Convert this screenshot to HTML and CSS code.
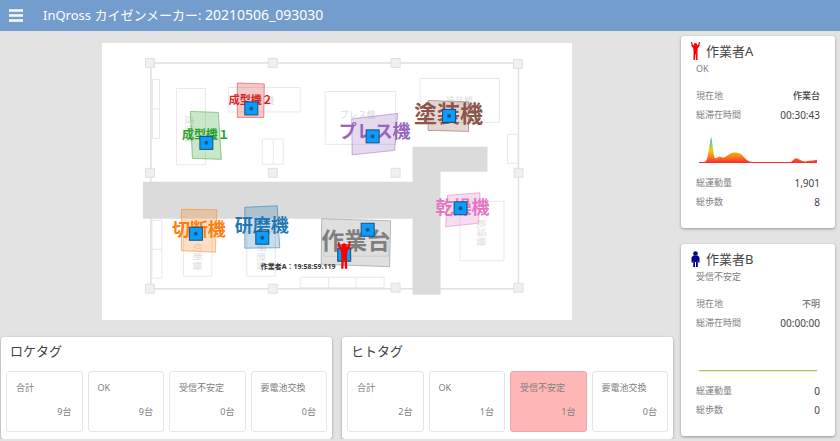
FILE: index.html
```html
<!DOCTYPE html>
<html lang="ja">
<head>
  <meta charset="UTF-8">
  <meta name="viewport" content="width=device-width, initial-scale=1.0">
  <title>InQross カイゼンメーカー</title>
  <link rel="stylesheet" href="styles.css">
</head>
<body>
  <svg class="defs" aria-hidden="true">
    <defs>
      <g id="tag">
        <rect x="-6.5" y="-6.5" width="13" height="13" fill="#0c9cfb" stroke="#145078"/>
        <circle r="2" fill="#1d587f"/>
      </g>
      <path id="person-up" d="M0 0L1.6 0L2.6 4L4.2 5C4 2.6 5 1.5 6.5 1.5S9 2.600 8.800 5L10.400 4L11.400 0L13 0L12.200 6L9.800 9.500L9.300 14L9.500 27L7.200 27L6.900 18.500L6.100 18.500L5.800 27L3.500 27L3.700 14L3.200 9.500L.8 6Z"/>
      <g id="person">
        <circle cx="4.500" cy="2.500" r="2.300"/>
        <path d="M2.200 4.500H6.800L8.500 6.500V11.500L7.500 12L6.800 9V16H5V11H4V16H2.200V9L1.500 12L.5 11.500V6.500Z"/>
      </g>
      <linearGradient id="heat" gradientUnits="userSpaceOnUse" x1="0" y1="0" x2="0" y2="26">
        <stop offset="0" stop-color="#20d8d0"/>
        <stop offset=".25" stop-color="#7ecb70"/>
        <stop offset=".5" stop-color="#f5c518"/>
        <stop offset=".75" stop-color="#fb7a1c"/>
        <stop offset="1" stop-color="#fb1838"/>
      </linearGradient>
    </defs>
  </svg>

  <header class="header">
    <button class="menu" type="button" aria-label="メニュー">
      <svg width="14" height="13" viewBox="0 0 14 13"><path d="M0 1.500H14M0 6.500H14M0 11.500H14" stroke="#fff" stroke-width="2.500"/></svg>
    </button>
    <h1>InQross カイゼンメーカー: <span>20210506_093030</span></h1>
  </header>

  <div class="layout">
    <main class="main">
      <svg class="map" viewBox="102 43 471 277" role="img" aria-label="フロアマップ">
        <!-- building -->
        <g class="wall">
          <path d="M151 63H519V289H151Z"/>
        </g>
        <g class="ghost">
          <path d="M152.500 79.500H159.500V138.500H152.500ZM152.500 109H159.500"/>
          <path d="M176.500 88.500H205.500V165H176.500Z"/>
          <path d="M228.500 87.500H300.500V112H228.500Z"/>
          <path d="M262.500 139H283.500V164.500H262.500ZM273.500 139V164.500"/>
          <path d="M325.500 91.500H396V144.500H325.500Z"/>
          <path d="M420.500 78.500H500V122.500H420.500Z"/>
          <path d="M508 134.500H518.500V163.500H508Z"/>
          <path d="M152 220.500H162V278.500H152ZM152 249.500H162"/>
          <path d="M183.500 232V276.500H212V232Z"/>
          <path d="M247 232V276.500H275.500V232Z"/>
          <path d="M460.500 201.500H504.500V261H460.500Z"/>
          <path d="M300.500 277.500H384.500V288H300.500ZM329 277.500V288M356.500 277.500V288"/>
        </g>
        <g class="ghost-text">
          <text x="358" y="118">プレス機</text>
          <text x="460" y="104">塗装機</text>
          <text x="270" y="104">機</text>
          <text transform="translate(186 129) rotate(90)">成型機</text>
          <text transform="translate(194 257) rotate(90)">切断機</text>
          <text transform="translate(258 257) rotate(90)">研磨機</text>
          <text transform="translate(478 233) rotate(90)">乾燥機</text>
        </g>
        <path class="aisle" d="M143 182H413V147H488V172H441V295H413V219H143Z"/>
        <g class="pillar">
          <path d="M145.500 58.500h9v9h-9ZM268.500 58.500h9v9h-9ZM391.500 58.500h9v9h-9ZM514 59.500h9v9h-9Z"/>
          <path d="M145.500 168.500h9v9h-9ZM268.500 168.500h9v9h-9ZM391.500 168.500h9v9h-9ZM514.500 168.500h9v9h-9Z"/>
          <path d="M145.500 284.500h9v9h-9ZM268.500 284.500h9v9h-9ZM391.500 283.500h9v9h-9ZM514.500 283.500h9v9h-9Z"/>
        </g>

        <!-- work zones -->
        <g class="zone red">
          <path d="M237.500 83L264.500 84L264 117.500H237.500Z"/>
          <text class="s" x="251" y="104">成型機２</text>
        </g>
        <g class="zone green">
          <path d="M190.500 111.500L218.500 112.500L221.500 159.500L192.500 158.500Z"/>
          <text class="m" x="206" y="139">成型機１</text>
        </g>
        <g class="zone purple">
          <path d="M352 119L398 113.500L395 150.500L352.500 155Z"/>
          <text class="l" x="375" y="138">プレス機</text>
        </g>
        <g class="zone brown">
          <path d="M428.500 100.500L469 102V131.500L428.500 130.500Z"/>
          <text class="xl" x="449" y="122">塗装機</text>
        </g>
        <g class="zone orange">
          <path d="M181.500 209.500L217 210L215.500 252.500L181.500 251Z"/>
          <text class="l" x="199" y="236">切断機</text>
        </g>
        <g class="zone blue">
          <path d="M245 207.500L277.500 206L280 248L245 248.500Z"/>
          <text class="l" x="262" y="232">研磨機</text>
        </g>
        <g class="zone gray">
          <path d="M322 219L391 221L390 267L321.500 264.500Z"/>
          <path class="desk" d="M324.500 238V256.500H388.500V238"/>
          <text class="xl" x="356" y="249">作業台</text>
        </g>
        <g class="zone pink">
          <path d="M448 195.500L480.500 193L479 223.500L446 227Z"/>
          <text class="l" x="463" y="214">乾燥機</text>
        </g>

        <!-- tags -->
        <use href="#tag" x="251.500" y="108.500"/>
        <use href="#tag" x="206.500" y="143"/>
        <use href="#tag" x="373" y="136.500"/>
        <use href="#tag" x="449.500" y="116"/>
        <use href="#tag" x="196" y="234"/>
        <use href="#tag" x="262.500" y="238"/>
        <use href="#tag" x="368" y="230"/>
        <use href="#tag" x="461" y="208.500"/>
        <use href="#tag" x="344.500" y="255"/>
        <use href="#person-up" x="338" y="242" fill="#f00"/>
        <text class="worker-label" x="261" y="269">作業者A：19:58:59.119</text>
      </svg>

      <div class="tag-cards">
        <section class="card tags">
          <h2>ロケタグ</h2>
          <dl class="counts">
            <div><dt>合計</dt><dd>9台</dd></div>
            <div><dt>OK</dt><dd>9台</dd></div>
            <div><dt>受信不安定</dt><dd>0台</dd></div>
            <div><dt>要電池交換</dt><dd>0台</dd></div>
          </dl>
        </section>
        <section class="card tags">
          <h2>ヒトタグ</h2>
          <dl class="counts">
            <div><dt>合計</dt><dd>2台</dd></div>
            <div><dt>OK</dt><dd>1台</dd></div>
            <div class="alert"><dt>受信不安定</dt><dd>1台</dd></div>
            <div><dt>要電池交換</dt><dd>0台</dd></div>
          </dl>
        </section>
      </div>
    </main>

    <aside class="workers">
      <section class="card worker">
        <h2>
          <svg width="9" height="18" viewBox="0 0 13 27" preserveAspectRatio="none"><use href="#person-up" fill="#f00"/></svg>
          作業者A
        </h2>
        <p class="status">OK</p>
        <dl class="stats">
          <div><dt>現在地</dt><dd class="place">作業台</dd></div>
          <div><dt>総滞在時間</dt><dd>00:30:43</dd></div>
        </dl>
        <svg class="chart" viewBox="0 0 118 26" preserveAspectRatio="none">
          <path fill="url(#heat)" d="M0 24H5C8.500 24 8.500 19 10.500 8C12 -2 12.500 -2 13.500 8C15 18 15 21 17 20.500C19 19.500 20 18 23 19.500C27 21 30 15 35 15C41 15 43 17 46 20.500C49 23.500 51 24 54 24H92C95 22 95 20.500 97.500 20.500C101 21 102 24 107 23.500C112 22.500 114 23 118 22V25H0Z"/>
        </svg>
        <dl class="stats">
          <div><dt>総運動量</dt><dd>1,901</dd></div>
          <div><dt>総歩数</dt><dd>8</dd></div>
        </dl>
      </section>

      <section class="card worker">
        <h2>
          <svg width="9" height="16" viewBox="0 0 9 16"><use href="#person" fill="#00008b"/></svg>
          作業者B
        </h2>
        <p class="status">受信不安定</p>
        <dl class="stats">
          <div><dt>現在地</dt><dd class="place unknown">不明</dd></div>
          <div><dt>総滞在時間</dt><dd>00:00:00</dd></div>
        </dl>
        <svg class="chart" viewBox="0 0 118 27" preserveAspectRatio="none">
          <path d="M0 25.500H118" stroke="#9bcc7c"/>
          <path d="M0 26.500H118" stroke="#fde3b4"/>
        </svg>
        <dl class="stats">
          <div><dt>総運動量</dt><dd>0</dd></div>
          <div><dt>総歩数</dt><dd>0</dd></div>
        </dl>
      </section>
    </aside>
  </div>
</body>
</html>
```

FILE: styles.css
```css
* {
  box-sizing: border-box;
}
body {
  margin: 0;
  background: #e3e3e3;
  color: #444;
  font-family: "Noto Sans", "Noto Sans CJK JP", sans-serif;
  font-size: 9px;
  line-height: 12px;
}
h1, h2, p, dl, dd {
  margin: 0;
  font-weight: normal;
}
svg {
  display: block;
}
.defs {
  position: absolute;
  width: 0;
  height: 0;
}

.header {
  display: flex;
  align-items: center;
  gap: 20px;
  height: 31px;
  padding: 0 9px 2px;
  background: #729dcd;
  color: #fff;
}
.header h1 {
  font-size: 13px;
  line-height: 18px;
}
.header span {
  font-size: 14px;
}
.menu {
  padding: 2px 0 0;
  border: 0;
  background: none;
}

.layout {
  display: grid;
  grid-template-columns: 1fr 154px;
  gap: 8px;
  padding: 0 5px 0 1px;
}
.card {
  background: #fff;
  border-radius: 3px;
  box-shadow: 0 1px 3px rgba(0, 0, 0, 0.35);
}
.card h2 {
  font-size: 13px;
  line-height: 18px;
}

/* floor map */
.map {
  width: 70%;
  margin: 12px auto 17px;
  background: #fff;
}
.map path {
  fill: none;
}
.map .wall {
  stroke: #e0e0e0;
  stroke-width: 1.5;
}
.map .ghost {
  stroke: #e8e8e8;
}
.map .ghost-text {
  fill: #ddd;
  font-size: 9px;
}
.map .aisle {
  fill: #dbdbdb;
}
.map .pillar path {
  fill: #f0f0f0;
  stroke: #e0e0e0;
}
.map text {
  text-anchor: middle;
}
.zone text {
  fill: var(--c);
  font-weight: bold;
}
.zone path {
  fill: var(--c);
  fill-opacity: 0.25;
  stroke: var(--c);
  stroke-opacity: 0.5;
}
.zone .desk {
  fill: none;
  stroke-opacity: 0.2;
}
.red { --c: #d62728; }
.green { --c: #2ca02c; }
.purple { --c: #9467bd; }
.brown { --c: #8c564b; }
.orange { --c: #ff7f0e; }
.blue { --c: #1f77b4; }
.gray { --c: #7f7f7f; }
.pink { --c: #e377c2; }
.s { font-size: 11px; }
.m { font-size: 12px; }
.l { font-size: 18px; }
.xl { font-size: 23px; }
.map .worker-label {
  font-size: 7px;
  font-weight: bold;
  fill: #333;
  text-anchor: start;
}

/* tag counters */
.tag-cards {
  display: grid;
  grid-template-columns: 1fr 1fr;
  gap: 10px;
}
.tags {
  padding: 5px 5px 7px;
}
.tags h2 {
  padding-left: 4px;
}
.counts {
  display: grid;
  grid-template-columns: repeat(4, 1fr);
  gap: 5px;
  margin-top: 11px;
  color: #808080;
}
.counts div {
  padding: 10px 10px 13px 9px;
  border: 1px solid #e6e6e6;
  border-radius: 3px;
}
.counts dd {
  margin-top: 12px;
  text-align: right;
}
.counts .alert {
  background: #ffb6b6;
  border-color: #eda6a6;
}

/* worker cards */
.workers {
  display: flex;
  flex-direction: column;
  gap: 16px;
  padding-top: 5px;
}
.worker {
  padding: 6px 15px 20px;
}
.worker h2 {
  display: flex;
  align-items: center;
  gap: 6px;
  margin-left: -5px;
}
.status {
  margin-top: 3px;
  color: #808080;
}
.stats {
  display: grid;
  gap: 7px;
  color: #808080;
}
.status + .stats {
  margin-top: 15px;
}
.stats div {
  display: flex;
  justify-content: space-between;
}
.stats dd {
  color: #444;
  font-size: 10px;
}
.stats .place {
  font-size: 9px;
  font-weight: 500;
}
.stats .unknown {
  color: #777;
}
.chart {
  width: calc(100% - 6px);
  height: 27px;
  margin: 16px 3px 13px;
}
```
